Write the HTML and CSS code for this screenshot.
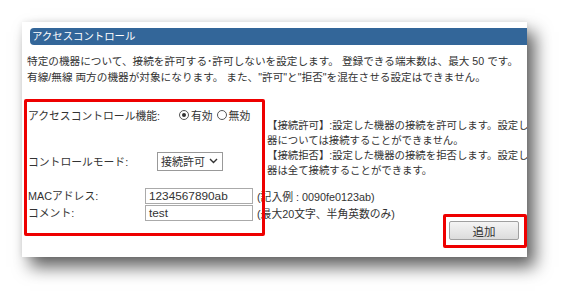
FILE: index.html
```html
<html>
  <head>
    <title>アクセスコントロール</title>
    <link rel="stylesheet" href="styles.css">
  </head>
  <body>
    <section class="card">
      <header class="title">アクセスコントロール</header>

      <p class="desc">
        特定の機器について、接続を許可する･許可しないを設定します。 登録できる端末数は、最大 50 です。<br>
        有線/無線 両方の機器が対象になります。 また、"許可"と"拒否"を混在させる設定はできません。
      </p>

      <div class="top-area">
        <div class="switches">
          <div class="row row-enable">
            <span class="label">アクセスコントロール機能:</span>
            <span class="radios">
              <span class="radio checked"></span>有効
              <span class="radio"></span>無効
            </span>
          </div>
          <div class="row row-mode">
            <span class="label">コントロールモード:</span>
            <span class="select">接続許可
              <svg width="9" height="6" viewBox="0 0 9 6"><path d="M1 1 L4.5 4.5 L8 1" fill="none" stroke="#333" stroke-width="1.4"/></svg>
            </span>
          </div>
        </div>
        <div class="help">
          【接続許可】:設定した機器の接続を許可します。設定していない機<br>
          器については接続することができません。<br>
          【接続拒否】:設定した機器の接続を拒否します。設定していない機<br>
          器は全て接続することができます。
        </div>
      </div>

      <div class="entries">
        <span class="label">MACアドレス:</span>
        <span class="text-input">1234567890ab</span>
        <span class="note">(記入例 : 0090fe0123ab)</span>

        <span class="label">コメント:</span>
        <span class="text-input">test</span>
        <span class="note">(最大20文字、半角英数のみ)</span>
      </div>

      <div class="actions">
        <button class="add-button">追加</button>
      </div>

      <!-- annotation frames -->
      <div class="mark mark-form"></div>
      <div class="mark mark-button"></div>
    </section>
  </body>
</html>
```

FILE: styles.css
```css
body {
  margin: 0;
  background-color: #ffffff;
  font-family: "Liberation Sans", "Noto Sans CJK JP", sans-serif;
  color: #333333;
}

* {
  box-sizing: border-box;
}

.card {
  position: relative;
  margin: 22px 0 0 22px;
  width: 505px;
  height: 235px;
  overflow: hidden;
  background-color: #ffffff;
  box-shadow: 8px 10px 16px rgba(0, 0, 0, 0.62), 0 0 6px rgba(0, 0, 0, 0.08);
}

.title {
  margin: 6px 0 0 8px;
  height: 17px;
  padding-left: 2px;
  background-color: #336699;
  border-radius: 4px 0 0 4px;
  color: #ffffff;
  font-size: 10.4px;
  line-height: 17px;
  white-space: nowrap;
}

.desc {
  margin: 8px 0 0 5px;
  font-size: 10.65px;
  line-height: 16px;
  white-space: nowrap;
}

.top-area {
  display: flex;
  margin-top: 15px;
}

.switches {
  width: 246px;
  flex: none;
  padding-left: 6px;
}

.row {
  display: flex;
  align-items: center;
  font-size: 10.8px;
}

.row-enable {
  height: 30px;
}

.row-mode {
  height: 20px;
  margin-top: 21px;
}

.label {
  font-size: 10.8px;
  white-space: nowrap;
}

.row-enable .label {
  width: 151px;
}

.row-mode .label {
  width: 129px;
}

.radios {
  display: flex;
  align-items: center;
  white-space: nowrap;
}

.radio {
  display: inline-block;
  width: 10px;
  height: 10px;
  margin-right: 2px;
  border: 1px solid #555555;
  border-radius: 50%;
  position: relative;
}

.radios .radio:nth-of-type(2) {
  margin-left: 4px;
}

.radio.checked::after {
  content: "";
  position: absolute;
  left: 2px;
  top: 2px;
  width: 4px;
  height: 4px;
  border-radius: 50%;
  background-color: #333333;
}

.select {
  display: inline-flex;
  align-items: center;
  gap: 4px;
  height: 19px;
  padding: 0 4px 0 3px;
  border: 1px solid #999999;
  background-color: #ffffff;
  font-size: 11px;
  white-space: nowrap;
}

.help {
  margin: 18px 0 0 -1px;
  font-size: 10.4px;
  line-height: 15px;
  white-space: nowrap;
}

.entries {
  display: grid;
  grid-template-columns: 117px 108px auto;
  row-gap: 1px;
  align-items: center;
  margin: 10px 0 0 6px;

  .label {
    line-height: 16px;
  }

  .text-input {
    height: 16px;
    padding-left: 3px;
    border: 1px solid #aaaaaa;
    font-size: 11.8px;
    line-height: 14px;
  }

  .note {
    margin-left: 4px;
    font-size: 10.8px;
    white-space: nowrap;
  }
}

.actions {
  display: flex;
  justify-content: flex-end;
  padding-right: 8px;
}

.add-button {
  width: 70px;
  height: 19px;
  border: 1px solid #a0a0a0;
  border-radius: 2px;
  background: linear-gradient(#f4f4f4, #dcdcdc);
  color: #333333;
  font-family: "Noto Sans CJK JP", sans-serif;
  font-size: 11.5px;
  line-height: 16px;
  padding: 0;
}

.mark {
  position: absolute;
  border: 3px solid #ee0000;
  border-radius: 2px;
}

.mark-form {
  left: 2px;
  top: 77px;
  width: 241px;
  height: 137px;
}

.mark-button {
  left: 421px;
  top: 192px;
  width: 84px;
  height: 34px;
}
```
